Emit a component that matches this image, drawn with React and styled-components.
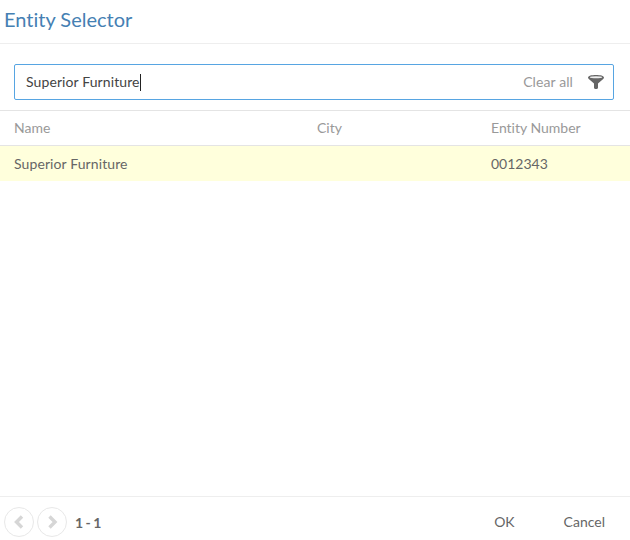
import React from "react";
import styled, { createGlobalStyle } from "styled-components";

const GlobalStyle = createGlobalStyle`
  * { box-sizing: border-box; }
  body { margin: 0; background: #fff; }
`;

const Dialog = styled.div`
  display: flex;
  flex-direction: column;
  width: 630px;
  height: 540px;
  background: #fff;
  color: #666;
  font: 14px/20px Lato, sans-serif;
  font-variant-ligatures: none;
  overflow: hidden;
`;

const Header = styled.header`
  height: 44px;
  padding: 5px 4px 0;
  border-bottom: 1px solid #eee;
`;

const Title = styled.h1`
  margin: 0;
  font-size: 20px;
  line-height: 28px;
  font-weight: 400;
  color: #4580b3;
`;

const SearchArea = styled.div`
  padding: 20px 16px 10px 14px;
`;

const SearchBox = styled.div`
  display: flex;
  align-items: center;
  height: 36px;
  padding: 0 9px 0 11px;
  border: 1px solid #57a5e2;
  border-radius: 2px;
`;

const Query = styled.span`
  color: #444;
  letter-spacing: 0.1px;
`;

const Caret = styled.span`
  width: 1px;
  height: 17px;
  background: #222;
`;

const ClearButton = styled.button`
  margin: 0 15px 0 auto;
  padding: 0;
  border: 0;
  background: none;
  font: inherit;
  letter-spacing: 0.1px;
  color: #999;
`;

const Row = styled.div`
  display: grid;
  grid-template-columns: 303px 174px 1fr;
  align-items: center;
  height: ${(p) => (p.$head ? 36 : 35)}px;
  padding-left: 14px;
  color: ${(p) => (p.$head ? "#999" : "#666")};
  letter-spacing: ${(p) => (p.$head ? "0" : "0.1px")};
  background: ${(p) => (p.$selected ? "#ffffdc" : "transparent")};
  border-top: ${(p) => (p.$head ? "1px solid #e4e4e4" : "0")};
  border-bottom: ${(p) => (p.$head ? "1px solid #e4e4e4" : "0")};
`;

const EntityNumber = styled.span`
  letter-spacing: 0;
`;

const Footer = styled.footer`
  display: flex;
  align-items: center;
  height: 44px;
  margin-top: auto;
  padding: 7px 25px 0 4px;
  border-top: 1px solid #eee;
`;

const PageButton = styled.button`
  display: flex;
  align-items: center;
  justify-content: center;
  width: 30px;
  height: 30px;
  margin-right: 3px;
  padding: 0;
  border: 1px solid #e8e8e8;
  border-radius: 50%;
  background: #fff;
`;

const Range = styled.span`
  margin-left: 5px;
  padding-top: 2px;
  font-weight: 700;
  word-spacing: -0.9px;
`;

const Actions = styled.div`
  display: flex;
  gap: 49px;
  margin-left: auto;
`;

const ActionButton = styled.button`
  padding: 0;
  border: 0;
  background: none;
  font: inherit;
  color: #666;
`;

const FilterIcon = () => (
  <svg width="16" height="16" viewBox="0 0 16 16">
    <path d="M0 3.500C0 1.800 3.600 1 8 1s8 .8 8 2.500c0 .6-.3 1-.8 1.400L10 9.500v4.200c0 .8-.9 1.300-2 1.300s-2-.5-2-1.300V9.500L.8 4.900C.3 4.500 0 4.100 0 3.500z" fill="#666" />
    <ellipse cx="8" cy="3.200" rx="6.200" ry="1" fill="#eee" />
  </svg>
);

const Chevron = ({ d }) => (
  <svg width="16" height="16" viewBox="0 0 16 16">
    <path d={d} fill="none" stroke="#d6d6d6" strokeWidth="3.400" />
  </svg>
);

export default function App() {
  return (
    <Dialog>
      <GlobalStyle />
      <Header>
        <Title>Entity Selector</Title>
      </Header>
      <SearchArea>
        <SearchBox>
          <Query>Superior Furniture</Query>
          <Caret />
          <ClearButton>Clear all</ClearButton>
          <FilterIcon />
        </SearchBox>
      </SearchArea>
      <Row $head>
        <span>Name</span>
        <span>City</span>
        <span>Entity Number</span>
      </Row>
      <Row $selected>
        <span>Superior Furniture</span>
        <span />
        <EntityNumber>0012343</EntityNumber>
      </Row>
      <Footer>
        <PageButton aria-label="Previous page">
          <Chevron d="M11 2.500 5.500 8l5.500 5.500" />
        </PageButton>
        <PageButton aria-label="Next page">
          <Chevron d="M5.500 2.500 11 8l-5.500 5.500" />
        </PageButton>
        <Range>1 - 1</Range>
        <Actions>
          <ActionButton>OK</ActionButton>
          <ActionButton>Cancel</ActionButton>
        </Actions>
      </Footer>
    </Dialog>
  );
}
